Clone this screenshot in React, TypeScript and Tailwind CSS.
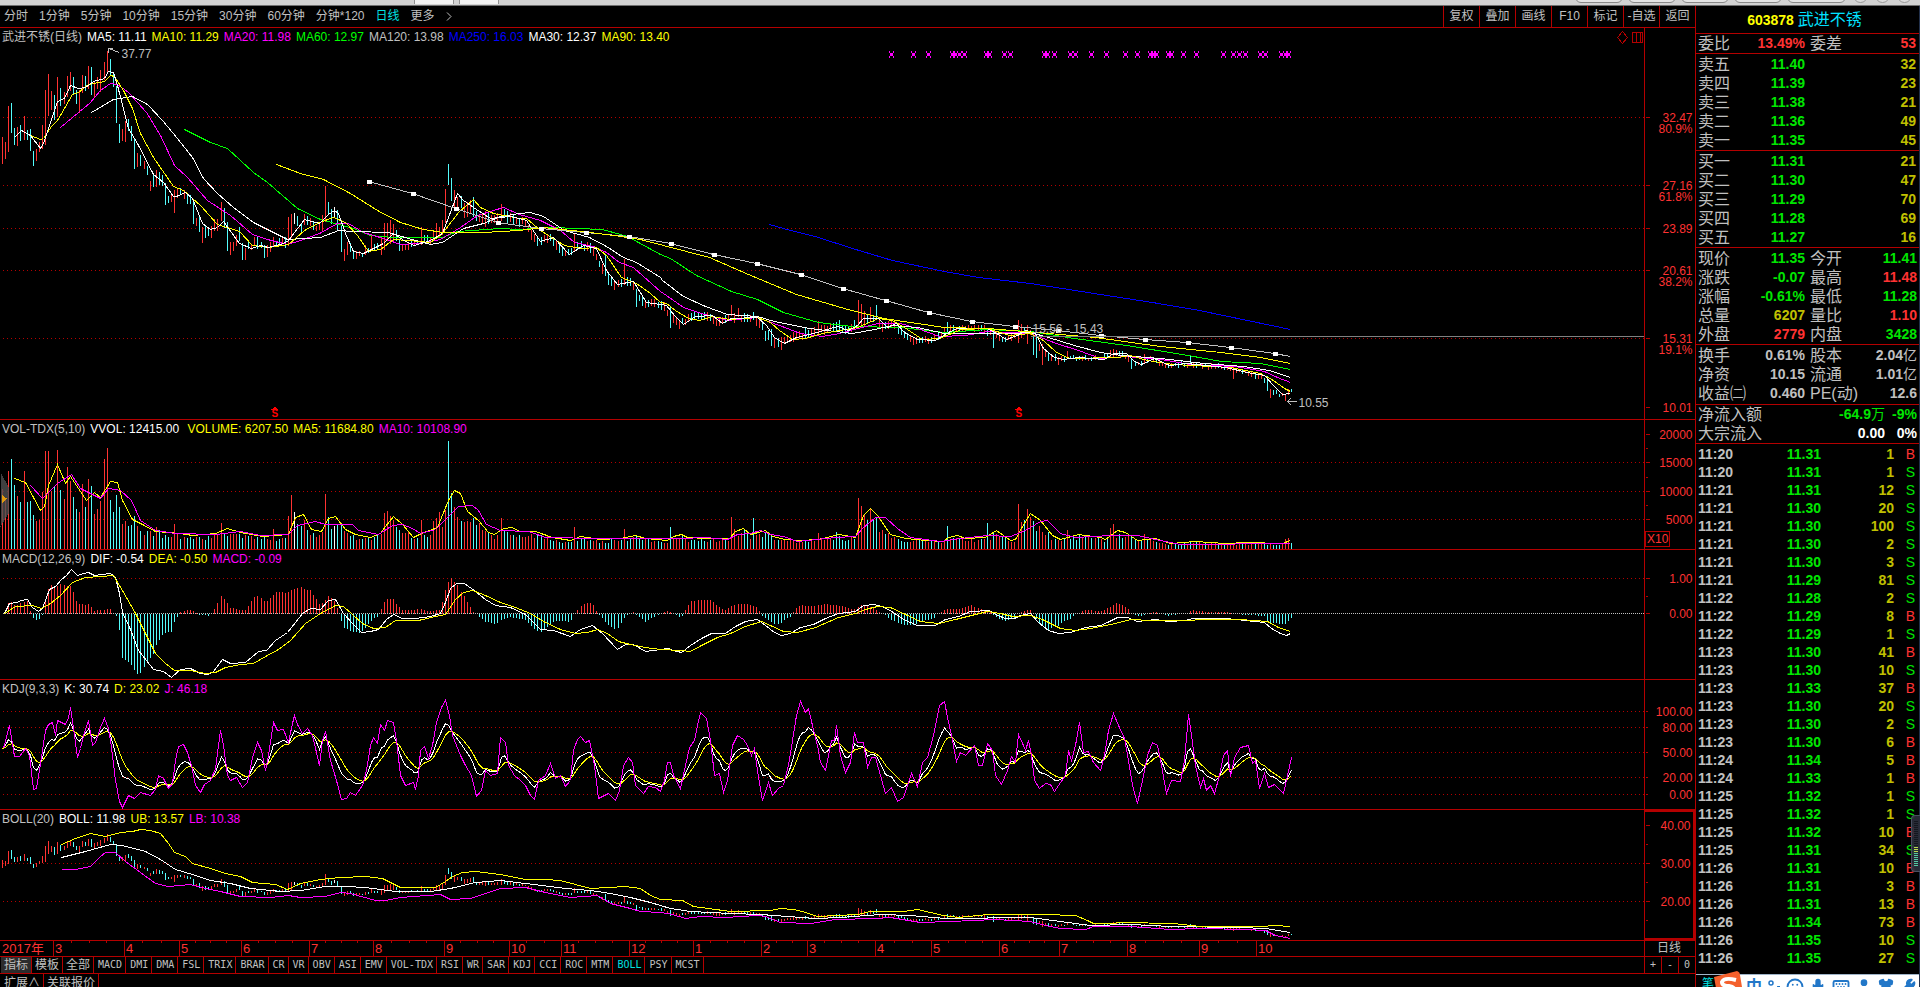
import type { ReactNode } from "react";
import { Keyboard, Mic, Shirt, Smile, User, Wrench } from "lucide-react";
import clsx from "clsx";

type Point = [number, number];

interface Bar {
  x: number;
  top: number;
  bottom: number;
  color: string;
}

interface Tick {
  y: number;
  label?: string;
  sub?: string;
  minor?: boolean;
}

const UP = "#ff3232";
const DOWN = "#54fcfc";
const LINE = "#b40000";
const YELLOW = "#ffff00";
const MAGENTA = "#ff00ff";
const GREEN = "#00ff00";
const GREY = "#c0c0c0";

const BAR_COUNT = 420;
const BAR_STEP = 3.0775;

const barX = (i: number) => Math.round(2 + i * BAR_STEP);
const barIndex = (x: number) => Math.round((x - 2) / BAR_STEP);

function parse(text: string): Point[] {
  return text
    .trim()
    .split(/\s+/)
    .map((pair) => pair.split(",").map(Number) as Point);
}

function sample(points: Point[], x: number) {
  if (x <= points[0][0]) return points[0][1];
  for (let i = 1; i < points.length; i++) {
    const [x1, y1] = points[i];
    if (x <= x1) {
      const [x0, y0] = points[i - 1];
      return y0 + ((y1 - y0) * (x - x0)) / (x1 - x0);
    }
  }
  return points[points.length - 1][1];
}

// repeatable noise in 0..1
function noise(i: number) {
  const v = Math.sin(i * 12.9898 + 4.1) * 43758.5453;
  return v - Math.floor(v);
}

/* ---------- price ---------- */

const MA5 = parse(`14,137 21,130 30,135 40,148 43,143 49,125 57,101 64,98 70,85 78,88 85,87 93,81 104,78 108,71 113,72
117,85 128,128 137,143 153,174 163,182 173,196 176,196 185,192 192,198 202,223 210,229 217,227 223,221 228,228 239,243
251,248 260,245 268,247 283,243 288,240 304,219 319,223 328,214 334,210 338,213 345,233 353,251 363,253 373,248 383,243
393,233 399,237 405,241 414,245 430,240 442,233 448,217 457,193 463,200 476,209 490,218 500,217 510,216 519,218 526,220
540,241 553,237 569,254 583,245 596,248 606,270 617,284 633,281 646,302 660,304 666,305 674,315 683,324 695,316 712,315
722,323 731,318 757,317 766,325 774,337 784,343 796,337 813,333 837,326 848,330 857,325 863,318 878,318 887,327 896,323
904,332 917,339 935,340 948,332 957,328 987,328 996,333 1006,339 1017,335 1026,330 1035,333 1043,348 1054,357 1063,359
1078,357 1104,359 1113,353 1126,353 1134,361 1141,364 1154,358 1169,365 1186,363 1225,367 1247,372 1264,375 1273,385
1282,394 1290,393`);

const MA10 = parse(`30,135 40,139 43,138 51,126 57,120 64,108 72,94 78,92 88,84 104,81 110,75 114,76 123,90 132,108 140,133
153,157 173,186 183,190 200,205 217,224 239,231 252,245 268,247 288,244 304,230 319,222 333,217 345,222 357,235 368,251
380,249 393,239 408,240 430,242 442,233 458,212 473,199 480,207 493,213 519,218 526,218 540,230 564,245 581,248 596,247
606,255 621,277 636,283 650,293 660,302 666,303 675,310 688,318 699,320 712,316 729,319 757,317 770,322 779,330 792,339
805,338 822,333 857,327 878,318 892,320 904,327 922,339 939,338 961,329 987,328 1009,335 1030,333 1043,340 1056,352
1069,358 1117,357 1130,355 1147,360 1173,364 1230,367 1260,373 1273,380 1284,388 1290,391`);

const MA20 = parse(`60,127 78,112 89,103 100,90 110,83 117,84 128,92 146,112 160,135 174,165 187,177 207,200 230,215 252,234
267,239 287,244 300,240 319,233 337,223 348,223 363,232 383,238 400,244 417,243 440,239 460,227 477,215 503,207 519,214
540,220 560,230 574,242 593,246 606,252 619,262 633,267 660,291 666,295 683,307 701,313 727,320 757,317 779,325 800,333
822,336 839,333 861,327 878,323 900,323 917,328 939,336 965,335 987,331 1030,333 1056,343 1078,350 1100,358 1126,356
1160,359 1191,364 1234,366 1264,371 1277,377 1290,382`);

const MA30 = parse(`91,112 113,99 132,96 147,104 162,120 177,138 192,157 203,178 217,193 233,207 253,222 273,232 287,239
320,237 338,230 353,231 388,232 408,238 430,244 442,242 463,228 483,223 500,216 519,213 530,212 543,216 564,230 589,237
606,246 623,257 636,262 660,277 662,280 683,296 705,306 727,314 757,316 774,321 809,328 852,333 874,329 892,325 917,327
944,333 1009,333 1030,332 1048,337 1074,345 1100,352 1121,355 1160,358 1204,363 1243,366 1269,370 1290,377`);

const MA60 = parse(`184,129 210,142 227,148 253,172 267,182 297,208 320,219 353,228 370,235 393,237 442,237 457,231 500,228
519,229 551,227 602,229 627,236 660,254 670,258 696,275 731,291 757,299 783,312 818,322 852,326 900,327 944,332 987,329
1030,331 1074,338 1126,345 1182,354 1221,361 1260,363 1290,369`);

const MA90 = parse(`276,164 300,173 323,179 350,193 377,210 400,222 423,229 443,232 483,232 519,230 543,227 581,231 614,235
640,239 709,257 748,274 796,294 844,308 883,318 944,327 987,328 1048,333 1095,337 1160,346 1221,352 1260,357 1290,363`);

const MA120 = parse(`368,181 412,193 455,208 497,222 540,228 585,232 628,236 670,243 713,254 756,263 800,274 842,288 885,300
928,312 971,321 1014,326 1057,330 1100,335 1144,339 1187,342 1230,347 1274,353 1290,356`);

const MA250 = parse(`769,224 783,228 818,237 852,248 892,260 944,271 978,277 1030,283 1100,294 1152,302 1199,310 1247,320
1290,329`);

// high, low in thirds of a pixel below the title row; r = up, c = down, w = flat
const DAILY = `290,369r 303,354r 195,333r 186,277c 262,312c 258,315r 254,300c 225,297r 267,297c 264,330c 332,375c 324,360r
303,333r 252,324r 147,312r 99,225r 150,207r 162,237c 108,228r 141,195c 153,189r 105,168r 93,150r 108,160c 147,189c 147,216r
102,156r 105,150c 75,144r 78,162c 120,171r 108,144r 87,153r 63,117r 30,93r 54,105c 93,140c 135,246c 249,306c 264,300r
240,303r 234,270c 255,300c 294,384c 336,378r 342,375c 360,385r 375,402c 420,450r 400,438c 387,438r 393,432c 402,435c
426,492c 465,486c 462,483r 447,516r 441,471r 441,462c 447,475r 456,489c 462,489c 483,549c 531,555r 525,573c 558,606r
555,591c 564,585c 555,591r 536,570r 534,570r 483,540r 501,561c 543,630c 605,642r 603,630r 582,615r 558,600c 606,657c
621,657r 603,624c 609,627r 588,612r 588,624c 603,621c 612,651c 612,648r 603,633r 588,618r 600,618c 591,615c 585,609r
588,621c 528,615r 519,591r 516,549w 525,555c 549,573c 519,552r 525,552c 531,555r 540,567c 555,570r 549,567r 522,570r
435,543r 483,519c 504,549c 498,528w 507,570c 555,633c 624,660r 603,642r 606,633c 630,654c 630,654r 630,645r 636,648c
612,642r 621,636c 585,630r 609,627c 606,624c 588,642r 546,627r 546,600r 537,609r 549,600r 567,600c 597,630c 610,630r
610,627r 603,627r 597,618c 603,615r 600,612c 558,612r 582,606c 582,606c 588,609r 570,600r 546,591r 558,591r 537,582r
444,546r 369,432c 411,480c 447,510r 468,499r 465,501c 486,531r 483,528r 477,519r 468,528c 510,540c 519,543r 516,549r
510,558r 513,549c 522,546r 522,546r 516,543r 489,540r 504,531c 510,546c 516,543r 519,552c 528,549r 531,558c`;

const SWINGS: [number, number, number, string][] = [
  [574, 232, 250, "r"], [606, 253, 275, "c"], [609, 273, 284, "c"], [624, 258, 284, "r"], [636, 288, 306, "c"],
  [670, 305, 327, "c"], [731, 304, 315, "r"], [738, 307, 316, "r"], [766, 330, 340, "c"], [771, 328, 345, "c"],
  [774, 336, 347, "r"], [780, 336, 349, "r"], [817, 320, 333, "r"], [839, 319, 330, "c"], [857, 299, 328, "r"],
  [860, 303, 327, "r"], [864, 310, 325, "r"], [870, 306, 320, "r"], [876, 304, 318, "c"], [947, 321, 333, "c"],
  [993, 328, 347, "c"], [1017, 319, 342, "r"], [1020, 323, 337, "r"], [1027, 324, 343, "r"], [1033, 330, 354, "c"],
  [1036, 333, 357, "c"], [1042, 343, 364, "r"], [1048, 352, 360, "c"], [1068, 350, 358, "r"], [1110, 349, 357, "r"],
  [1113, 348, 357, "r"], [1131, 357, 368, "c"], [1144, 353, 362, "r"], [1190, 355, 362, "c"], [1233, 365, 378, "r"],
  [1267, 375, 390, "c"], [1271, 388, 397, "r"], [1274, 389, 394, "c"], [1286, 393, 400, "r"], [1288, 388, 394, "r"],
  [1291, 388, 391, "c"],
];

const barColor = (code: string) => (code === "r" ? UP : code === "c" ? DOWN : "#ffffff");

function buildPriceBars(): Bar[] {
  const bars: Bar[] = DAILY.trim()
    .split(/\s+/)
    .map((entry, i) => {
      const [high, low] = entry.slice(0, -1).split(",").map(Number);
      return { x: barX(i), top: 40 + high / 3, bottom: 40 + low / 3, color: barColor(entry.slice(-1)) };
    });
  for (let i = bars.length; i < BAR_COUNT; i++) {
    const x = barX(i);
    const mid = sample(MA5, x + 4);
    const fade = x > 1060 ? 1 : x > 900 ? 2 : 3;
    const half = fade + noise(i) * 2;
    const shift = (noise(i + 500) - 0.5) * 3;
    const up = noise(i + 900) > 0.5;
    bars.push({ x, top: mid + shift - half, bottom: mid + shift + half, color: up ? UP : DOWN });
  }
  for (const [x, top, bottom, code] of SWINGS) {
    const i = Math.min(barIndex(x), BAR_COUNT - 1);
    bars[i] = { x: barX(i), top, bottom, color: barColor(code) };
  }
  return bars;
}

const PRICE_BARS = buildPriceBars();

const SIGNALS = [
  891, 913, 928, 952, 955, 959, 964, 986, 989, 1004, 1010, 1044, 1047, 1054, 1070, 1075, 1091, 1106, 1125, 1137, 1150,
  1153, 1156, 1168, 1171, 1183, 1196, 1223, 1233, 1239, 1245, 1260, 1265, 1281, 1285, 1288,
];

/* ---------- volume ---------- */

const VOL_BASE = 548;

const VOL_MA5 = parse(`14,478 25,482 40,510 44,506 48,485 57,464 65,483 70,476 86,500 94,492 100,497 110,481 117,482 122,500
132,519 142,524 155,531 180,533 192,535 215,533 227,528 240,532 262,536 288,534 295,517 303,514 311,529 321,531 328,518
335,516 345,529 355,534 370,537 380,533 385,526 393,516 402,524 413,537 421,533 437,527 448,500 454,490 460,493 467,511
478,520 488,532 494,534 503,528 512,527 519,531 535,531 552,537 570,540 580,536 600,539 620,538 635,535 645,538 667,540
673,536 681,534 687,537 705,538 729,538 735,531 743,528 750,534 758,532 765,530 772,536 785,539 800,540 818,539 839,534
855,537 863,515 870,508 877,515 890,534 905,538 925,540 943,541 948,537 957,535 965,538 985,537 996,530 1010,540 1015,539
1022,526 1030,513 1040,520 1052,535 1060,539 1078,534 1100,537 1105,539 1117,530 1125,532 1137,540 1155,538 1170,543
1195,541 1225,543 1247,542 1282,543 1290,540`);

const VOL_MA10 = parse(`30,485 42,498 57,483 71,474 80,488 100,498 108,488 120,490 131,500 140,520 155,530 175,533 215,534
240,531 260,535 288,534 297,525 315,521 325,524 352,524 358,530 378,534 392,525 402,524 412,528 420,533 435,529 446,518
458,506 472,505 478,510 486,524 500,530 528,531 545,537 600,538 640,538 680,538 705,537 727,539 737,534 750,533 760,530
770,534 783,536 797,541 835,537 855,536 862,528 875,517 885,517 897,528 910,537 940,541 960,538 987,535 1010,536
1025,530 1040,521 1047,520 1060,533 1075,537 1110,535 1137,535 1155,539 1180,544 1290,543`);

const VOL_TOPS = [
  235, 265, 180, 144, 222, 255, 273, 180, 273, 270, 312, 330, 328, 243, 120, 120, 240, 225, 117, 237, 264, 168, 210, 258,
  294, 303, 219, 288, 204, 225, 309, 294, 270, 144, 111, 267, 303, 252, 288, 339, 330, 345, 342, 315, 345, 360, 372, 360,
  360, 375, 348, 357, 381, 372, 378, 378, 339, 366,
];

const VOL_SPIKES = parse(`220,522 274,528 288,515 291,494 294,511 297,523 300,525 304,519 325,493 328,516 331,528 334,525
340,522 384,512 387,510 390,515 420,519 434,520 437,517 440,511 444,509 448,440 451,492 454,506 457,516 460,520 463,521
467,520 470,521 473,517 476,524 500,517 574,526 624,528 670,526 731,516 734,528 754,517 817,532 836,531 857,497 860,505
864,513 867,519 870,508 873,519 876,517 879,531 947,525 987,522 1017,503 1020,521 1024,519 1027,508 1030,516 1033,520
1036,530 1039,525 1042,531 1068,529 1110,527 1113,523 1144,533 1285,538 1288,537`);

const VOLUME_BARS: Bar[] = PRICE_BARS.map((bar, i) => {
  const height = VOL_BASE - sample(VOL_MA5, bar.x);
  const top = i < VOL_TOPS.length ? 410 + VOL_TOPS[i] / 3 : VOL_BASE - height * (0.6 + noise(i + 40) * 0.4);
  return { ...bar, top, bottom: VOL_BASE };
});
for (const [x, top] of VOL_SPIKES) VOLUME_BARS[barIndex(x)].top = top;

/* ---------- macd ---------- */

const MACD_ZERO = 613;

const DIF = parse(`4,613 9,603 16,602 21,600 27,599 32,607 38,611 42,608 49,589 55,586 61,579 66,575 71,569 77,575 83,573
88,572 94,575 110,573 115,577 119,593 122,612 130,629 138,650 146,660 153,669 163,671 171,677 180,669 190,668 200,673
208,674 213,671 222,659 230,663 245,662 258,651 266,650 275,640 287,632 295,622 302,613 310,608 320,609 328,600 335,599
343,613 352,623 361,632 370,631 378,629 386,619 393,614 402,618 415,618 430,616 440,613 445,602 450,588 456,583 464,583
475,591 485,599 495,605 510,607 525,614 540,629 553,630 570,636 580,629 592,625 602,633 617,649 625,644 633,644 645,651
660,649 668,648 673,650 681,652 690,645 701,638 711,633 725,633 735,626 745,621 757,619 765,625 774,632 781,635 790,633
800,627 813,624 825,618 838,613 855,611 863,605 874,604 884,607 893,612 903,619 917,625 935,625 945,619 958,616 970,611
989,610 997,615 1005,618 1014,618 1020,615 1030,613 1038,622 1048,630 1058,633 1070,632 1085,627 1100,625 1107,622
1117,617 1127,617 1137,621 1155,619 1168,621 1185,620 1192,618 1210,618 1225,618 1245,620 1264,622 1271,628 1280,633
1286,635 1290,633`);

const DEA = parse(`4,613 15,606 32,605 41,608 50,603 60,595 72,582 85,577 100,576 113,575 122,590 135,613 145,633 155,653
165,663 174,670 190,670 205,673 215,672 225,667 240,664 253,663 265,656 278,649 290,640 305,623 320,613 335,605 343,606
352,614 362,623 373,628 385,627 395,620 418,620 435,616 445,614 455,599 463,592 472,590 485,595 500,602 515,607 530,613
543,621 560,629 575,633 587,632 597,629 607,633 618,641 630,644 645,647 660,649 680,650 690,651 701,645 717,637 730,633
745,626 761,621 770,625 783,631 797,632 815,627 838,617 855,613 865,609 877,606 890,607 905,614 920,621 938,623 955,619
975,614 987,611 1000,613 1012,616 1030,615 1042,619 1060,628 1075,630 1090,628 1115,623 1130,619 1150,620 1185,620
1205,619 1240,619 1267,621 1278,627 1290,631`);

const MACD_BARS: Bar[] = PRICE_BARS.map(({ x }) => {
  const delta = 2 * (sample(DIF, x) - sample(DEA, x));
  return delta < 0
    ? { x, top: MACD_ZERO + delta, bottom: MACD_ZERO, color: UP }
    : { x, top: MACD_ZERO, bottom: MACD_ZERO + delta, color: DOWN };
});

/* ---------- kdj ---------- */

const J_KEYS = parse(`3,748 9,725 14,756 19,756 25,748 29,755 33,789 36,788 39,770 45,730 48,724 52,722 55,735 57,720 65,724
68,717 70,707 74,735 77,757 80,748 83,735 88,720 92,745 95,742 100,727 104,718 108,728 111,747 115,780 119,801 122,807
128,795 134,798 140,792 150,795 155,789 158,775 163,778 168,788 172,783 175,760 178,746 183,744 187,752 191,765 195,785
200,792 204,784 210,780 215,768 220,730 223,745 227,775 230,780 236,777 242,787 247,782 252,757 257,742 261,750 265,770
268,755 273,722 277,730 283,729 288,742 292,723 294,715 297,724 302,733 307,728 312,735 319,765 322,740 325,731 330,760
336,780 341,799 346,798 350,792 355,795 362,785 366,770 370,745 373,737 377,743 380,724 384,730 387,720 393,722 396,740
400,775 405,785 413,782 415,789 418,775 420,750 424,746 428,758 432,745 436,722 441,707 445,700 449,715 452,735 456,745
460,755 465,765 471,775 476,796 481,790 485,770 490,775 497,773 500,737 505,742 508,765 514,775 520,780 525,785 530,795
534,799 538,780 545,775 550,763 555,778 560,775 565,786 570,780 573,750 577,739 580,736 585,742 589,740 594,765 598,798
608,793 615,800 619,790 623,765 628,757 632,762 635,785 643,793 648,786 655,787 660,791 664,780 667,762 670,762 673,775
680,788 685,765 689,747 694,740 697,725 700,712 706,718 710,740 714,775 719,773 723,792 727,780 732,745 737,735 743,739
747,745 751,755 754,748 757,770 762,800 768,782 772,795 778,788 783,785 788,765 792,740 796,715 800,701 805,712 808,708
812,725 817,745 820,762 825,770 828,755 831,740 834,740 836,725 840,755 845,772 850,762 854,732 857,742 863,742 867,767
871,757 875,757 880,775 885,793 891,787 897,801 903,797 907,785 911,773 917,786 922,762 927,757 933,735 939,705 944,701
947,717 951,735 956,761 960,752 965,755 974,745 978,765 982,765 987,743 992,750 995,775 1001,784 1007,770 1011,756
1015,762 1018,734 1023,745 1025,750 1028,740 1031,755 1034,780 1039,788 1045,783 1050,784 1054,791 1060,782 1065,775
1068,750 1071,760 1075,745 1079,722 1083,752 1088,751 1093,762 1100,770 1104,755 1108,730 1113,713 1118,725 1124,738
1128,760 1132,785 1137,803 1142,780 1147,755 1152,742 1157,745 1161,765 1166,793 1171,780 1180,781 1184,760 1188,714
1191,735 1195,765 1200,787 1203,778 1206,790 1210,785 1214,793 1219,775 1223,755 1227,750 1230,776 1234,757 1240,747
1248,745 1252,763 1255,760 1259,788 1264,773 1268,787 1274,784 1278,788 1283,793 1287,775 1291,757`);

// J = 3K - 2D and D is the 1/3 smoothing of K, so both follow from J
function buildKdj() {
  const k: Point[] = [];
  const d: Point[] = [];
  let prev = J_KEYS[0][1];
  for (const { x } of PRICE_BARS) {
    const kv = (3 * sample(J_KEYS, x) + 4 * prev) / 7;
    const dv = (2 * prev + kv) / 3;
    k.push([x, kv]);
    d.push([x, dv]);
    prev = dv;
  }
  return { k, d };
}

const KDJ = buildKdj();

/* ---------- boll ---------- */

const BOLL_UP = parse(`61,844 75,838 90,833 105,836 120,832 132,831 140,829 150,830 160,833 168,843 174,852 185,856 192,863
210,868 225,873 240,876 252,882 275,884 287,889 300,883 320,879 340,877 365,876 382,878 390,882 400,887 435,887 445,881
452,876 462,872 475,871 500,874 525,879 545,879 560,880 590,888 625,886 640,888 650,895 660,899 682,900 693,906 708,908
730,911 770,910 780,908 793,909 802,911 817,916 857,914 870,911 903,911 917,909 930,912 943,915 958,917 987,914 1043,914
1075,915 1087,920 1093,923 1110,923 1122,922 1173,923 1200,926 1260,926 1275,925 1290,926`);

const BOLL_MID = parse(`61,857 85,851 110,844 122,845 145,851 160,859 175,869 192,874 210,880 230,883 250,888 280,891 300,890
325,886 345,886 365,887 395,891 430,891 450,888 475,882 500,880 525,883 565,888 590,890 610,893 630,897 650,902 670,908
690,911 730,913 760,914 815,918 840,917 880,914 910,915 945,918 1030,917 1060,921 1090,925 1130,924 1170,926 1240,927
1265,928 1290,932`);

const BOLL_LOW = parse(`61,869 75,869 90,866 100,856 105,852 115,852 125,861 140,872 155,883 168,886 190,884 205,888 220,891
240,896 270,897 288,895 300,897 325,896 340,892 350,893 375,900 385,900 400,897 440,894 450,899 470,898 500,888 525,887
545,892 570,897 597,895 610,903 630,908 640,911 660,912 672,914 685,918 700,916 725,917 757,915 765,916 780,922 810,923
835,919 875,918 890,917 920,922 950,921 995,919 1030,921 1045,925 1060,928 1085,929 1093,926 1130,926 1170,929 1200,928
1245,929 1265,930 1275,935 1290,938`);

// same prices on the coarser BOLL scale
const toBoll = (y: number) => 901 - 3.8 * (32.47 - (y - 117) / 12.88 - 20);
const BOLL_BARS: Bar[] = PRICE_BARS.map((bar) => ({ ...bar, top: toBoll(bar.top), bottom: toBoll(bar.bottom) }));

/* ---------- tables ---------- */

const PERIODS = ["分时", "1分钟", "5分钟", "10分钟", "15分钟", "30分钟", "60分钟", "分钟*120", "日线", "更多"];
const ACTIONS = ["复权", "叠加", "画线", "F10", "标记", "-自选", "返回"];
const CJK_TABS = ["指标", "模板", "全部"];
const INDICATORS = [
  "MACD", "DMI", "DMA", "FSL", "TRIX", "BRAR", "CR", "VR", "OBV", "ASI", "EMV", "VOL-TDX", "RSI", "WR", "SAR", "KDJ",
  "CCI", "ROC", "MTM", "BOLL", "PSY", "MCST",
];

const MONTHS: [number, string][] = [
  [53, "3"], [124, "4"], [179, "5"], [241, "6"], [309, "7"], [373, "8"], [444, "9"], [509, "10"], [561, "11"],
  [629, "12"], [693, "1"], [761, "2"], [807, "3"], [875, "4"], [931, "5"], [999, "6"], [1059, "7"], [1127, "8"],
  [1199, "9"], [1256, "10"],
];

const SELLS = [["卖五", "11.40", "32"], ["卖四", "11.39", "23"], ["卖三", "11.38", "21"], ["卖二", "11.36", "49"], ["卖一", "11.35", "45"]];
const BUYS = [["买一", "11.31", "21"], ["买二", "11.30", "47"], ["买三", "11.29", "70"], ["买四", "11.28", "69"], ["买五", "11.27", "16"]];

const TRADES = `11:20 11.31 1 B|11:20 11.31 1 S|11:21 11.31 12 S|11:21 11.30 20 S|11:21 11.30 100 S|11:21 11.30 2 S|11:21 11.30 3 S|11:21 11.29 81 S|11:22 11.28 2 S|11:22 11.29 8 B|11:22 11.29 1 S|11:23 11.30 41 B|11:23 11.30 10 S|11:23 11.33 37 B|11:23 11.30 20 S|11:23 11.30 2 S|11:23 11.30 6 B|11:24 11.34 5 B|11:24 11.33 1 B|11:25 11.32 1 S|11:25 11.32 1 S|11:25 11.32 10 B|11:25 11.31 34 S|11:26 11.31 10 B|11:26 11.31 3 B|11:26 11.31 13 B|11:26 11.34 73 B|11:26 11.35 10 S|11:26 11.35 27 S`
  .split("|")
  .map((row) => row.split(" "));

const QUOTES = [
  ["现价", "11.35", "text-[#00e600]", "今开", "11.41", "text-[#00e600]"],
  ["涨跌", "-0.07", "text-[#00e600]", "最高", "11.48", "text-[#ff3232]"],
  ["涨幅", "-0.61%", "text-[#00e600]", "最低", "11.28", "text-[#00e600]"],
  ["总量", "6207", "text-[#c0c000]", "量比", "1.10", "text-[#ff3232]"],
  ["外盘", "2779", "text-[#ff3232]", "内盘", "3428", "text-[#00e600]"],
];
const BASICS = [
  ["换手", "0.61%", "text-[#c0c0c0]", "股本", "2.04亿", "text-[#c0c0c0]"],
  ["净资", "10.15", "text-[#c0c0c0]", "流通", "1.01亿", "text-[#c0c0c0]"],
  ["收益㈡", "0.460", "text-[#c0c0c0]", "PE(动)", "12.6", "text-[#c0c0c0]"],
];

/* ---------- drawing helpers ---------- */

function Line({ points, color }: { points: Point[]; color: string }) {
  return <polyline points={points.map((p) => p.join(",")).join(" ")} fill="none" stroke={color} />;
}

function Bars({ bars }: { bars: Bar[] }) {
  return (
    <>
      {bars.map((b, i) => (
        <line key={i} x1={b.x} x2={b.x} y1={b.top} y2={b.bottom} stroke={b.color} />
      ))}
    </>
  );
}

function Grid({ rows }: { rows: number[] }) {
  return (
    <>
      {rows.map((y) => (
        <line key={y} x1="2" x2="100%" y1={y} y2={y} stroke={LINE} strokeDasharray="1 3" />
      ))}
    </>
  );
}

interface PanelProps {
  top: number;
  height: string;
  title: [string, string][];
  ticks: Tick[];
  grid: number[];
  boxed?: boolean;
  unit?: string;
  children: ReactNode;
}

function Panel({ top, height, title, ticks, grid, boxed, unit, children }: PanelProps) {
  return (
    <section className={clsx("flex shrink-0 border-b border-[#b40000]", height)}>
      <div className="relative min-w-0 flex-1 overflow-hidden">
        <svg className="absolute inset-0 h-full w-full" shapeRendering="crispEdges">
          <g transform={`translate(0.5 ${0.5 - top})`}>
            <Grid rows={grid} />
            {children}
          </g>
        </svg>
        <h2 className="relative flex gap-[5px] pl-[2px] text-xs leading-[18px] whitespace-pre">
          {title.map(([text, color]) => (
            <span key={text} className={color}>
              {text}
            </span>
          ))}
        </h2>
      </div>
      <div className={clsx("relative w-[51px] shrink-0 border-l border-[#b40000]", boxed && "border-2")}>
        <svg className="absolute inset-0 h-full w-full overflow-visible" shapeRendering="crispEdges">
          <g transform={`translate(0.5 ${0.5 - top})`} fill={UP} fontSize="12" textAnchor="end">
            {ticks.map((t) => (
              <g key={t.y}>
                <line x1="0" x2={t.minor ? 2 : 4} y1={t.y} y2={t.y} stroke={LINE} />
                {t.label && <text x={boxed ? 45 : 47} y={t.y + 4}>{t.label}</text>}
                {t.sub && <text x="47" y={t.y + 15}>{t.sub}</text>}
              </g>
            ))}
          </g>
        </svg>
        {unit && (
          <span className="absolute bottom-[2px] left-0 border border-[#b40000] px-px text-xs leading-[14px] text-[#ff3232]">
            {unit}
          </span>
        )}
      </div>
    </section>
  );
}

function DividendMark({ x }: { x: number }) {
  return (
    <g fill="#ff0000" stroke="none">
      <path d={`M${x - 3} 409h7l-3.5-3z`} />
      <text x={x - 3} y="416" fontSize="10" fontWeight="bold">
        S
      </text>
    </g>
  );
}

function SignalMark({ x }: { x: number }) {
  return (
    <g stroke={MAGENTA}>
      <path d={`M${x - 2} 50v2M${x + 2} 50v2M${x - 2} 55v2M${x + 2} 55v2`} />
      <path d={`M${x} 52v3`} strokeWidth="3" />
    </g>
  );
}

/* ---------- sidebar ---------- */

function QuoteGroup({ rows, pad }: { rows: string[][]; pad: string }) {
  return (
    <dl className={clsx("grid shrink-0 grid-cols-[109px_1fr] border-b border-[#b40000] pt-px", pad)}>
      {rows.flatMap(([la, va, ca, lb, vb, cb]) => [
        <div key={la} className="flex justify-between pl-[2px]">
          <dt className="text-base leading-[19px]">{la}</dt>
          <dd className={clsx("font-bold leading-[19px]", ca)}>{va}</dd>
        </div>,
        <div key={lb} className="flex justify-between pr-[2px] pl-[5px]">
          <dt className="text-base leading-[19px]">{lb}</dt>
          <dd className={clsx("font-bold leading-[19px]", cb)}>
            {vb.replace("亿", "")}
            {vb.endsWith("亿") && <span className="font-normal">亿</span>}
          </dd>
        </div>,
      ])}
    </dl>
  );
}

function OrderTable({ rows }: { rows: string[][] }) {
  return (
    <div className="shrink-0 border-b border-[#b40000] pt-px">
      <table className="w-full table-fixed">
        <tbody>
          {rows.map(([label, price, size]) => (
            <tr key={label} className="h-[19px] leading-[19px]">
              <th className="w-[48px] p-0 pl-[2px] text-left text-base leading-[19px] font-normal">{label}</th>
              <td className="w-[61px] p-0 text-right font-bold text-[#00e600]">{price}</td>
              <td className="p-0 pr-[3px] text-right font-bold text-[#c0c000]">{size}</td>
            </tr>
          ))}
        </tbody>
      </table>
    </div>
  );
}

function ImeBar() {
  return (
    <div className="relative flex h-[13px] shrink-0 border-t border-[#9fb4c8]">
      <span className="w-[30px] shrink-0 pl-[6px] text-xs leading-[18px] text-[#00e0e0]">笔</span>
      <div className="flex flex-1 items-start justify-between bg-white pt-[3px] pr-[3px] pl-[20px] text-[#2277c8]">
        <span className="text-base leading-[18px] font-bold">中</span>
        <svg className="h-4 w-3 shrink-0" viewBox="0 0 12 16">
          <circle cx="3" cy="5" r="2" fill="none" stroke="currentColor" strokeWidth="1.5" />
          <path d="M9 8h3v3l-2 2z" fill="currentColor" />
        </svg>
        <Smile className="h-[18px] w-[18px] shrink-0" strokeWidth={2.5} />
        <Mic className="h-4 w-4 shrink-0" fill="currentColor" />
        <Keyboard className="h-[18px] w-[18px] shrink-0" strokeWidth={2.5} />
        <User className="h-4 w-4 shrink-0" fill="currentColor" />
        <Shirt className="h-4 w-4 shrink-0" fill="currentColor" />
        <Wrench className="h-4 w-4 shrink-0" fill="currentColor" />
      </div>
      <svg className="absolute -top-[4px] left-[17px] h-[28px] w-[30px]" viewBox="0 0 30 28">
        <path d="M1 6L24 0q3 1 3 4l4 24H5Z" fill="#f4602c" />
        <path d="M23 9q-12-3-14 2 0 4 7 4 7 1 5 6-3 5-13 3" fill="none" stroke="#fff" strokeWidth="4" />
      </svg>
    </div>
  );
}

function VolumeWidget() {
  return (
    <div className="absolute top-[815px] right-0 flex h-[57px] w-[9px] flex-col gap-px rounded-l-sm border border-r-0 border-[#4a4f60] bg-[#2b2f3c]/90 py-[5px] pl-[2px]">
      {Array.from({ length: 23 }, (_, i) => (
        <span
          key={i}
          className={clsx("h-px w-[4px] shrink-0", i < 13 ? "bg-[#14161e]" : i < 16 ? "bg-[#b9d94f]" : "bg-[#55c8a0]")}
        />
      ))}
    </div>
  );
}

function Sidebar() {
  return (
    <aside className="relative flex w-[225px] shrink-0 flex-col border-r border-l border-r-[#22304a] border-l-[#b40000] text-sm text-[#c0c0c0]">
      <h1 className="flex h-[28px] shrink-0 items-center justify-center gap-1 border-b border-[#b40000] pr-[6px] font-bold text-[#ffff00]">
        603878 <span className="text-base font-normal text-[#00e0ff]">武进不锈</span>
      </h1>
      <div className="grid h-[20px] shrink-0 grid-cols-[109px_1fr] border-b border-[#b40000] leading-[19px]">
        <div className="flex justify-between pl-[2px]">
          <span className="text-base leading-[19px]">委比</span>
          <b className="text-[#ff3232]">13.49%</b>
        </div>
        <div className="flex justify-between pr-[3px] pl-[5px]">
          <span className="text-base leading-[19px]">委差</span>
          <b className="text-[#ff3232]">53</b>
        </div>
      </div>
      <OrderTable rows={SELLS} />
      <OrderTable rows={BUYS} />
      <QuoteGroup rows={QUOTES} pad="pb-0" />
      <QuoteGroup rows={BASICS} pad="pb-px" />
      <dl className="shrink-0 border-b border-[#b40000] leading-[19px]">
        <div className="flex pr-[2px] pl-[2px]">
          <dt className="flex-1 text-base leading-[19px]">净流入额</dt>
          <dd className="font-bold text-[#00e600]">
            -64.9<span className="font-normal">万</span>
          </dd>
          <dd className="w-[32px] text-right font-bold text-[#00e600]">-9%</dd>
        </div>
        <div className="flex pr-[2px] pl-[2px]">
          <dt className="flex-1 text-base leading-[19px]">大宗流入</dt>
          <dd className="font-bold text-white">0.00</dd>
          <dd className="w-[32px] text-right font-bold text-white">0%</dd>
        </div>
      </dl>
      <div className="flex-1 pt-px">
        <table className="w-full table-fixed font-bold">
          <tbody>
            {TRADES.map(([time, price, size, side], i) => (
              <tr key={i} className="h-[18px] leading-[18px]">
                <td className="w-[53px] p-0 pl-[2px]">{time}</td>
                <td className="w-[72px] p-0 text-right text-[#00e600]">{price}</td>
                <td className="w-[73px] p-0 text-right text-[#c0c000]">{size}</td>
                <td className={clsx("p-0 pr-[4px] text-right font-normal", side === "B" ? "text-[#ff3232]" : "text-[#00e600]")}>
                  {side}
                </td>
              </tr>
            ))}
          </tbody>
        </table>
      </div>
      <ImeBar />
    </aside>
  );
}

/* ---------- bars around the charts ---------- */

function WindowEdge() {
  return (
    <div className="relative h-[6px] shrink-0 overflow-hidden border-b border-[#707070] bg-[#d2d2d2]">
      <svg className="absolute inset-0 h-full w-full">
        <path d="M415 0h38v4h-38zM460 0h38v4h-38z" fill="#f2f2f2" />
        <path d="M414.500 0v4M453.500 0v4M459.500 0v4M498.500 0v4" stroke="#909090" />
      </svg>
      <div className="absolute -top-[12px] right-[8px] flex gap-[5px]">
        <span className="h-[15px] w-[48px] rounded-md border border-[#888] bg-[#e4e4e4]" />
        <span className="h-[15px] w-[48px] rounded-md border border-[#888] bg-[#e4e4e4]" />
        <span className="h-[15px] w-[48px] rounded-md border border-[#888] bg-[#e4e4e4]" />
        <span className="h-[15px] w-[48px] rounded-md border border-[#888] bg-[#e4e4e4]" />
        <span className="h-[15px] w-[59px] rounded-md border border-[#888] bg-[#e4e4e4]" />
        <span className="ml-[2px] h-[15px] w-[15px] rounded-full border border-[#999] bg-[#dcdcdc]" />
        <span className="ml-[2px] h-[15px] w-[15px] rounded-full border border-[#999] bg-[#dcdcdc]" />
        <span className="ml-[2px] h-[15px] w-[15px] rounded-full border border-[#999] bg-[#dcdcdc]" />
      </div>
    </div>
  );
}

function MenuBar() {
  return (
    <nav className="flex h-[22px] shrink-0 items-stretch border-b border-[#b40000] text-xs leading-[21px]">
      <div className="flex flex-1 gap-[11px] pl-1">
        {PERIODS.map((p) => (
          <button key={p} type="button" className={p === "日线" ? "text-[#00e0e0]" : "text-[#c0c0c0]"}>
            {p}
          </button>
        ))}
        <svg className="mt-[6px] h-[9px] w-[6px]" viewBox="0 0 6 9">
          <path d="M1 0.500l4 4-4 4" fill="none" stroke={GREY} />
        </svg>
      </div>
      {ACTIONS.map((a) => (
        <button
          key={a}
          type="button"
          className="w-[36px] shrink-0 border-l border-[#b40000] text-center whitespace-nowrap text-[#c0c0c0]"
        >
          {a}
        </button>
      ))}
    </nav>
  );
}

function TimeAxis() {
  return (
    <div className="flex h-[16px] shrink-0 border-b border-[#b40000] text-[13px] leading-[15px] text-[#ff3232]">
      <div className="relative flex min-w-0 flex-1 overflow-hidden">
        <svg className="absolute inset-0 h-full w-full" shapeRendering="crispEdges">
          {MONTHS.flatMap(([x], i) => {
            const end = i + 1 < MONTHS.length ? MONTHS[i + 1][0] : x;
            const count = Math.round((end - x) / 17);
            return Array.from({ length: Math.max(count - 1, 0) }, (_, n) => {
              const tx = Math.round(x + ((n + 1) * (end - x)) / count);
              return <line key={`${x}-${n}`} x1={tx} x2={tx} y1="0" y2="2" stroke={LINE} />;
            });
          })}
        </svg>
        <span className="shrink-0 pl-[2px] whitespace-nowrap" style={{ width: MONTHS[0][0] }}>
          2017年
        </span>
        {MONTHS.map(([x, label], i) => (
          <span
            key={x}
            className="shrink-0 border-l border-[#b40000] pl-px"
            style={{ width: (i + 1 < MONTHS.length ? MONTHS[i + 1][0] : x + 60) - x }}
          >
            {label}
          </span>
        ))}
      </div>
      <span className="w-[51px] shrink-0 border-l border-[#b40000] pr-[14px] text-right text-xs leading-[15px] text-[#c0c0c0]">
        日线
      </span>
    </div>
  );
}

function IndicatorTabs() {
  return (
    <div className="flex h-[17px] shrink-0 border-b border-[#b40000] text-xs leading-[16px] text-[#c0c0c0]">
      <div className="flex min-w-0 flex-1 pl-px">
        {CJK_TABS.map((t, i) => (
          <button key={t} type="button" className={clsx("border-r border-[#b40000] px-[3px]", i === 0 && "bg-[#2c2c2c]")}>
            {t}
          </button>
        ))}
        {INDICATORS.map((t) => (
          <button
            key={t}
            type="button"
            className={clsx(
              "border-r border-[#b40000] pr-[3px] pl-1 font-['DejaVu_Sans_Mono',monospace] text-[10px]",
              t === "BOLL" && "text-[#00e0e0]",
            )}
          >
            {t}
          </button>
        ))}
      </div>
      <div className="flex w-[51px] shrink-0">
        {["+", "-", "0"].map((t) => (
          <button key={t} type="button" className="flex-1 border-l border-[#b40000] font-['DejaVu_Sans_Mono',monospace] text-[10px]">
            {t}
          </button>
        ))}
      </div>
    </div>
  );
}

function Charts() {
  return (
    <>
      <Panel
        top={28}
        height="h-[392px]"
        grid={[117, 185, 228, 270, 338]}
        ticks={[
          { y: 117, label: "32.47", sub: "80.9%" },
          { y: 185, label: "27.16", sub: "61.8%" },
          { y: 228, label: "23.89" },
          { y: 270, label: "20.61", sub: "38.2%" },
          { y: 338, label: "15.31", sub: "19.1%" },
          { y: 407, label: "10.01" },
        ]}
        title={[
          ["武进不锈(日线)", "text-[#c0c0c0]"],
          ["MA5: 11.11", "text-white"],
          ["MA10: 11.29", "text-[#ffff00]"],
          ["MA20: 11.98", "text-[#ff00ff]"],
          ["MA60: 12.97", "text-[#00ff00]"],
          ["MA120: 13.98", "text-[#c0c0c0]"],
          ["MA250: 16.03", "text-[#0000ff]"],
          ["MA30: 12.37", "text-white"],
          ["MA90: 13.40", "text-[#ffff00]"],
        ]}
      >
        <Bars bars={PRICE_BARS} />
        <Line points={MA250} color="#0000ff" />
        <Line points={MA60} color={GREEN} />
        <Line points={MA20} color={MAGENTA} />
        <Line points={MA30} color="#ffffff" />
        <Line points={MA10} color={YELLOW} />
        <Line points={MA5} color="#ffffff" />
        <Line points={MA120} color={GREY} />
        <Line points={MA90} color={YELLOW} />
        {MA120.slice(0, -1).map(([x, y]) => (
          <rect key={x} x={x - 2} y={y - 2} width="5" height="4" fill="#fff" />
        ))}
        {SIGNALS.map((x) => (
          <SignalMark key={x} x={x} />
        ))}
        <line x1="1030" x2="100%" y1="336" y2="336" stroke="#808080" />
        <path d="M108 48l11 4M108 52v-4h4M1287 401h9M1290 398l-3 3 4 4" fill="none" stroke={GREY} />
        <g fill={GREY} fontSize="12">
          <text x="121" y="57">37.77</text>
          <text x="1032" y="332">15.56 - 15.43</text>
          <text x="1298" y="406">10.55</text>
        </g>
        <DividendMark x={274} />
        <DividendMark x={1018} />
        <path d="M1622 31l5 6-5 6-5-6zM1632 32h10v10h-10zM1636 32v10M1640 32v10" fill="none" stroke={LINE} />
      </Panel>
      <Panel
        top={420}
        height="h-[130px]"
        grid={[462, 491, 519]}
        unit="X10"
        ticks={[
          { y: 434, label: "20000" },
          { y: 448, minor: true },
          { y: 462, label: "15000" },
          { y: 477, minor: true },
          { y: 491, label: "10000" },
          { y: 505, minor: true },
          { y: 519, label: "5000" },
        ]}
        title={[
          ["VOL-TDX(5,10)", "text-[#c0c0c0]"],
          ["VVOL: 12415.00 ", "text-white"],
          ["VOLUME: 6207.50", "text-[#ffff00]"],
          ["MA5: 11684.80", "text-[#ffff00]"],
          ["MA10: 10108.90", "text-[#ff00ff]"],
        ]}
      >
        <Bars bars={VOLUME_BARS} />
        <Line points={VOL_MA5} color={YELLOW} />
        <Line points={VOL_MA10} color={MAGENTA} />
        <path d="M0 472l8 14v27l-8 13z" fill="#505050" fillOpacity="0.8" />
        <path d="M1 494l5 4-5 5z" fill="#e09a10" />
      </Panel>
      <Panel
        top={550}
        height="h-[130px]"
        grid={[578]}
        ticks={[{ y: 578, label: "1.00" }, { y: 596, minor: true }, { y: 613, label: "0.00" }]}
        title={[
          ["MACD(12,26,9)", "text-[#c0c0c0]"],
          ["DIF: -0.54", "text-white"],
          ["DEA: -0.50", "text-[#ffff00]"],
          ["MACD: -0.09", "text-[#ff00ff]"],
        ]}
      >
        <Bars bars={MACD_BARS} />
        <line x1="2" x2="100%" y1={MACD_ZERO} y2={MACD_ZERO} stroke="#c0c0c0" strokeDasharray="1 1" />
        <Line points={DIF} color="#ffffff" />
        <Line points={DEA} color={YELLOW} />
      </Panel>
      <Panel
        top={680}
        height="h-[130px]"
        grid={[711, 727, 752, 777, 794]}
        ticks={[
          { y: 711, label: "100.00", minor: true },
          { y: 727, label: "80.00", minor: true },
          { y: 752, label: "50.00", minor: true },
          { y: 777, label: "20.00", minor: true },
          { y: 794, label: "0.00", minor: true },
        ]}
        title={[
          ["KDJ(9,3,3)", "text-[#c0c0c0]"],
          ["K: 30.74", "text-white"],
          ["D: 23.02", "text-[#ffff00]"],
          ["J: 46.18", "text-[#ff00ff]"],
        ]}
      >
        <Line points={KDJ.k} color="#ffffff" />
        <Line points={KDJ.d} color={YELLOW} />
        <Line points={J_KEYS} color={MAGENTA} />
      </Panel>
      <Panel
        top={810}
        height="h-[131px]"
        grid={[863, 901]}
        boxed
        ticks={[
          { y: 823, label: "40.00" },
          { y: 842, minor: true },
          { y: 861, label: "30.00" },
          { y: 880, minor: true },
          { y: 899, label: "20.00" },
          { y: 918, minor: true },
        ]}
        title={[
          ["BOLL(20)", "text-[#c0c0c0]"],
          ["BOLL: 11.98", "text-white"],
          ["UB: 13.57", "text-[#ffff00]"],
          ["LB: 10.38", "text-[#ff00ff]"],
        ]}
      >
        <Bars bars={BOLL_BARS} />
        <Line points={BOLL_MID} color="#ffffff" />
        <Line points={BOLL_UP} color={YELLOW} />
        <Line points={BOLL_LOW} color={MAGENTA} />
      </Panel>
    </>
  );
}

export default function App() {
  return (
    <div className="relative flex h-screen flex-col overflow-hidden bg-black font-['Liberation_Sans','Noto_Sans_CJK_SC',sans-serif]">
      <WindowEdge />
      <div className="flex min-h-0 flex-1">
        <main className="flex min-w-0 flex-1 flex-col overflow-hidden">
          <MenuBar />
          <Charts />
          <TimeAxis />
          <IndicatorTabs />
          <div className="flex shrink-0 pl-px text-xs leading-[18px] text-[#c0c0c0]">
            <button type="button" className="border-r border-[#b40000] px-[3px]">
              扩展∧
            </button>
            <button type="button" className="border-r border-[#b40000] px-[3px]">
              关联报价
            </button>
          </div>
        </main>
        <Sidebar />
      </div>
      <VolumeWidget />
    </div>
  );
}
